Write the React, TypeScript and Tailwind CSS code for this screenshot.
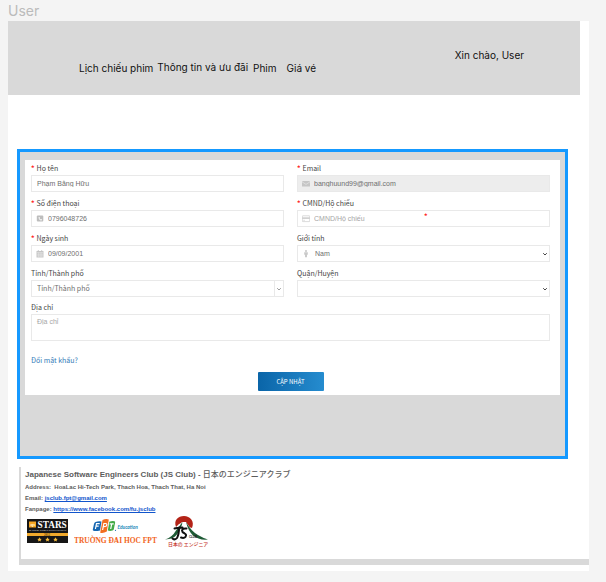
import type { ReactNode } from "react";

const labelText = "flex h-3.5 items-center gap-0.5 text-[7px] leading-[14px] text-[#444444]";
const box = "flex h-[17px] items-center border border-[#e9e9e9]";
const control =
  "h-full min-w-0 flex-1 appearance-none bg-transparent p-0 text-[7px] leading-[15px] text-[#6e6e6e] outline-none placeholder:text-[#a6a6a6]";
const plain = "font-['Liberation_Sans',Arial,sans-serif]";

type FieldProps = { id: string; label: string; required?: boolean; children: ReactNode };

function Field({ id, label, required, children }: FieldProps) {
  return (
    <div className="min-w-0">
      <label htmlFor={id} className={labelText}>
        {required && <span className="font-bold text-[#ff2020]">*</span>}
        <span>{label}</span>
      </label>
      {children}
    </div>
  );
}

function PhoneIcon() {
  return (
    <svg viewBox="0 0 8 8" className="ml-1 mr-1 size-2 shrink-0" aria-hidden="true">
      <rect x=".8" y=".5" width="6.500" height="6" rx="1" fill="#bdbdbd" />
      <path d="M2.7 1.900c-.5 1.500 1 3.600 2.800 3.500l.5-.8-1-.6-.5.400c-.5-.2-.8-.6-1-1.100l.400-.4-.5-1z" fill="#fff" />
    </svg>
  );
}

function CalendarIcon() {
  return (
    <svg viewBox="0 0 8 8" className="ml-1 mr-1 size-2 shrink-0" aria-hidden="true">
      <path d="M.5 1h7v6.500h-7z" fill="#c6c6c6" />
      <path d="M2.300 0v1.500M5.700 0v1.500" stroke="#c2c2c2" strokeWidth=".8" />
      <path d="M1 2.500h6M1 4.200h6M1 5.900h6M2.600 2.500v4.500M4.200 2.500v4.500M5.800 2.500v4.500" stroke="#fff" strokeWidth=".3" />
    </svg>
  );
}

function MailIcon() {
  return (
    <svg viewBox="0 0 8 8" className="ml-1 mr-1 size-2 shrink-0" aria-hidden="true">
      <rect x="0" y="1" width="8" height="5.600" rx=".4" fill="#c6c6c6" />
      <path d="M0 1.800l4 2.600L8 1.800" fill="none" stroke="#ededed" strokeWidth=".6" />
    </svg>
  );
}

function CardIcon() {
  return (
    <svg viewBox="0 0 8 8" className="ml-1 mr-1 size-2 shrink-0" aria-hidden="true">
      <rect x=".3" y=".8" width="7.400" height="5.800" rx=".5" fill="#fff" stroke="#c2c2c2" strokeWidth=".6" />
      <path d="M.3 3.100h7.400" stroke="#c2c2c2" strokeWidth="1.300" />
      <path d="M1.200 5.300h1.800" stroke="#c2c2c2" strokeWidth=".5" />
    </svg>
  );
}

function PersonIcon() {
  return (
    <svg viewBox="0 0 8 8" className="ml-1 mr-[5px] size-2 shrink-0" aria-hidden="true">
      <circle cx="4" cy="1" r="1" fill="#c6c6c6" />
      <path d="M2.200 2.200h3.600v2.500h-.8v2.600h-2v-2.600h-.8z" fill="#cacaca" />
    </svg>
  );
}

function Chevron({ color }: { color: string }) {
  return (
    <svg viewBox="0 0 8 8" className="size-2 shrink-0" aria-hidden="true">
      <path d="M2.200 3.200L4 5l1.800-1.800" fill="none" stroke={color} strokeWidth="1" />
    </svg>
  );
}

function StarsLogo() {
  return (
    <svg viewBox="0 0 42 24" className="h-6 w-[42px] shrink-0" role="img" aria-label="QS Stars">
      <rect width="41" height="24" fill="#161616" />
      <rect x="2" y="2.500" width="7" height="6" fill="#f5a623" />
      <text x="3.500" y="7.200" fontSize="5" fill="#fff3d5" fontFamily="Liberation Serif, serif">qs</text>
      <text x="10.500" y="8.800" fontSize="9.300" fill="#fff" fontFamily="Liberation Serif, serif">STARS</text>
      <text x="2" y="12.300" fontSize="2.900" fill="#ccc" fontFamily="Liberation Serif, serif">RATED FOR EXCELLENCE</text>
      <rect y="14" width="41" height="3" fill="#f0a92c" />
      <text x="17" y="16.600" fontSize="3" fill="#5f430b" fontFamily="Liberation Serif, serif">2012</text>
      {[12.5, 20.5, 28.5].map((x) => (
        <path key={x} transform={`translate(${x} 20.500)`} d="M0-2.200l.7 1.400 1.500.2-1.100 1.100.300 1.500L0 1.300l-1.400.7.300-1.500-1.100-1.100 1.500-.2z" fill="#f9bd3c" />
      ))}
    </svg>
  );
}

function FptLogo() {
  return (
    <svg viewBox="0 0 84 26" className="h-[26px] w-[84px] shrink-0" role="img" aria-label="FPT Education, Trường Đại học FPT">
      <g transform="translate(18 1)">
        <path d="M3.500 3q3-1.200 6-.5L8 11.500q-4 1-6.500.3-.9-.3-.7-1.300L2 5q.300-1.500 1.500-2z" fill="#1767b1" />
        <path d="M10.500 1q3.500-1.500 6.300-.5L14.800 12.500q-3.300 2-6.600 1.200z" fill="#f26f21" />
        <path d="M17.300 2.800q3.200-1.300 5.200-.5.800.4.600 1.400l-1.200 6.300q-.3 1.300-1.400 1.600-2.500.6-4.700 0z" fill="#43aa47" />
        <path d="M3.400 10l1.100-5.300h3.200M4 7.200h2.700M10.600 11l1.300-6.500h1.700q1.500 0 1.200 1.500-.3 1.700-3.200 1.700M17.700 4.800h4M19.700 4.800L18.700 10" fill="none" stroke="#fff" strokeWidth="1.200" />
        <circle cx="23.500" cy="11.300" r=".6" fill="#1767b1" />
        <text x="25.500" y="9.600" fontSize="4.800" fontWeight="700" fontStyle="italic" fill="#2387b8" fontFamily="Lato, sans-serif">Education</text>
      </g>
      <text x="0" y="24.600" fontSize="7.450" fontWeight="700" fill="#f26522" fontFamily="Liberation Serif, serif">TRUỜNG ĐẠI HỌC FPT</text>
    </svg>
  );
}

function ClubLogo() {
  return (
    <svg viewBox="0 0 44 32" className="h-8 w-11 shrink-0" role="img" aria-label="JS Club">
      <path d="M11 12C8.500 5 13 1 19 1s11 5 8 12l-3-1-5-5-5 2z" fill="#b32317" />
      <path d="M11 14q4-5 6-7h4l7 10-2 5-10 1z" fill="#fff" />
      <path d="M0 24.500q7-2 11-9l6.500-8.500q-1 7-6 13-3 4-11.500 4.500z" fill="#1f5b36" />
      <path d="M21 7q5 9 12 13 5 3 10 4.500-9 1-15-4-5-5-7-13.500z" fill="#1f5b36" />
      <path d="M14 12.500q0 7-2 10.500-2 2.500-4.500.5M9.500 13.500q4-1 8-1M21.500 13.500q-4-.5-4.500 2 0 1.800 2.500 2.800 2.500 1.200 1 3.500-1.500 1.800-4.500.7" fill="none" stroke="#111" strokeWidth="2" strokeLinecap="round" />
      <text x="24" y="23.200" fontSize="2.900" fontWeight="700" fill="#222" fontFamily="Liberation Sans, sans-serif">CLUB</text>
      <text x="3" y="30.500" fontSize="4.900" fontWeight="500" fill="#c5332a" fontFamily="Noto Sans CJK JP, sans-serif">日本の エンジニア</text>
    </svg>
  );
}

export default function App() {
  return (
    <div className="min-h-screen bg-[#f4f4f4] pr-[17px] pb-2.5 pl-2 font-['Inter',sans-serif]">
      <h1 className="h-[21px] pt-0.5 text-sm leading-[18px] text-[#bbbbbb]">User</h1>
      <div className="bg-white pb-1.5">
        <header className="mr-[9px] flex h-[74px] items-start justify-between bg-[#d9d9d9] pr-14 pl-[71px] text-[10px] leading-3 text-[#111111]">
          <nav className="flex items-end pt-10">
            <a href="#schedule" className="mr-1">Lịch chiếu phim</a>
            <a href="#offers" className="mr-[5px] pb-px">Thông tin và ưu đãi</a>
            <a href="#movies" className="mr-2.5">Phim</a>
            <a href="#prices">Giá vé</a>
          </nav>
          <span className="pt-7">Xin chào, User</span>
        </header>

        <main className="mt-[54px] mr-[21px] ml-[9px] h-[310px] border-3 border-[#1599ff] bg-[#d9d9d9] px-[5px] pt-2">
          <form className="bg-white pt-px pr-2.5 pb-1 pl-1.5 font-['Noto_Sans_CJK_SC','Noto_Sans',sans-serif]" onSubmit={(e) => e.preventDefault()}>
            <div className="grid grid-cols-2 gap-x-[13px] gap-y-1">
              <Field id="name" label="Họ tên" required>
                <div className={box}>
                  <input id="name" className={`${control} ${plain} pl-[5px]`} defaultValue="Phạm Bằng Hữu" />
                </div>
              </Field>
              <Field id="email" label="Email" required>
                <div className={`${box} bg-[#ededed]`}>
                  <MailIcon />
                  <input id="email" type="email" readOnly className={`${control} ${plain}`} defaultValue="banghuund99@gmail.com" />
                </div>
              </Field>
              <Field id="phone" label="Số điện thoại" required>
                <div className={box}>
                  <PhoneIcon />
                  <input id="phone" type="tel" className={`${control} ${plain}`} defaultValue="0796048726" />
                </div>
              </Field>
              <Field id="identity" label="CMND/Hộ chiếu" required>
                <div className={box}>
                  <CardIcon />
                  <input id="identity" className={`${control} ${plain}`} placeholder="CMND/Hộ chiếu" />
                  <span className="w-[125px] self-start text-[7px] leading-[11px] font-bold text-[#ff2020]">*</span>
                </div>
              </Field>
              <Field id="birthday" label="Ngày sinh" required>
                <div className={box}>
                  <CalendarIcon />
                  <input id="birthday" className={`${control} ${plain}`} defaultValue="09/09/2001" />
                </div>
              </Field>
              <Field id="gender" label="Giới tính">
                <div className={box}>
                  <PersonIcon />
                  <select id="gender" className={`${control} ${plain}`}>
                    <option>Nam</option>
                    <option>Nữ</option>
                  </select>
                  <Chevron color="#444444" />
                </div>
              </Field>
              <Field id="city" label="Tỉnh/Thành phố">
                <div className={box}>
                  <select id="city" className={`${control} pl-[5px]`}>
                    <option>Tỉnh/Thành phố</option>
                  </select>
                  <span className="flex h-full items-center border-l border-[#e9e9e9]">
                    <Chevron color="#999999" />
                  </span>
                </div>
              </Field>
              <Field id="district" label="Quận/Huyện">
                <div className={box}>
                  <select id="district" className={`${control} ${plain}`}>
                    <option value=""></option>
                  </select>
                  <Chevron color="#444444" />
                </div>
              </Field>
            </div>
            <div className="mt-[3px]">
              <label htmlFor="address" className={labelText}>Địa chỉ</label>
              <textarea
                id="address"
                placeholder="Địa chỉ"
                className="block h-[27px] w-full resize-none border border-[#e9e9e9] px-[5px] py-0.5 font-['Liberation_Sans',Arial,sans-serif] text-[7px] leading-[9px] outline-none placeholder:text-[#a6a6a6]"
              />
            </div>
            <a href="#password" className="mt-3 block w-fit text-[7px] leading-[14px] text-[#337ab7]">Đổi mật khẩu?</a>
            <button className="mx-auto mt-[5px] block h-[19px] w-[66px] rounded-[1px] bg-linear-to-r from-[#0a65a8] to-[#258ccf] text-[6px] text-white">
              CẬP NHẬT
            </button>
          </form>
        </main>

        <footer className="mt-2 ml-[11px] border-b-6 border-l-2 border-[#d9d9d9] bg-white pb-3 pl-1 font-['Liberation_Sans',Arial,'Noto_Sans_CJK_JP',sans-serif] text-[6px] leading-[11px] font-bold text-[#5c5c5c]">
          <h2 className="pt-0.5 pb-px text-[8px] leading-3">
            Japanese Software Engineers Club (JS Club) - <span className="font-medium">日本のエンジニアクラブ</span>
          </h2>
          <p>Address: &nbsp;HoaLac Hi-Tech Park, Thach Hoa, Thach That, Ha Noi</p>
          <p>
            Email: <a href="mailto:jsclub.fpt@gmail.com" className="text-[#1155cc] underline">jsclub.fpt@gmail.com</a>
          </p>
          <p>
            Fanpage: <a href="https://www.facebook.com/fu.jsclub" className="text-[#1155cc] underline">https://www.facebook.com/fu.jsclub</a>
          </p>
          <div className="flex h-8 items-center gap-[7px] pl-0.5">
            <div className="-mr-[2px]"><StarsLogo /></div>
            <FptLogo />
            <ClubLogo />
          </div>
        </footer>
      </div>
    </div>
  );
}
